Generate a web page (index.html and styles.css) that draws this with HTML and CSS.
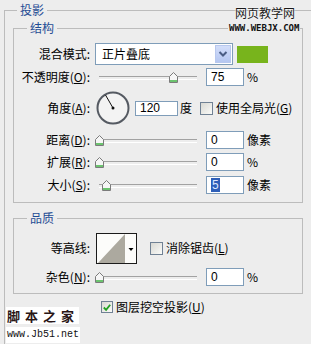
FILE: index.html
```html
<!DOCTYPE html>
<html lang="zh-CN">
<head>
    <meta charset="UTF-8">
    <title>投影</title>
    <link rel="stylesheet" href="styles.css">
</head>
<body>
    <fieldset class="group outer">
        <legend>投影</legend>

        <fieldset class="group inner">
            <legend>结构</legend>
            <div class="row row-blend">
                <label class="label">混合模式:</label>
                <div class="select">
                    <span class="select-text">正片叠底</span>
                    <span class="select-btn">
                        <svg width="14" height="18" viewBox="0 0 14 18"><polyline points="3.5,7 7,10.5 10.5,7" fill="none" stroke="#4a5d84" stroke-width="2"/></svg>
                    </span>
                </div>
                <span class="swatch"></span>
            </div>
            <div class="row row-opacity">
                <label class="label">不透明度(<u>O</u>):</label>
                <div class="slider"><span class="thumb" style="left: 74px"><svg width="9" height="11" viewBox="0 0 9 11"><path d="M0.5 10.5V4.5L4.5 0.5L8.5 4.5V10.5Z" fill="#f6f6f6" stroke="#7b7b7b"/><rect x="1" y="8" width="7" height="2" fill="#6cc36f"/></svg></span></div>
                <span class="field">75</span>
                <span class="unit">%</span>
            </div>
            <div class="row row-angle">
                <label class="label">角度(<u>A</u>):</label>
                <svg class="dial" width="34" height="34" viewBox="0 0 34 34">
                    <circle cx="17" cy="17" r="15.5" fill="#f3f3f3" stroke="#555a62" stroke-width="2"/>
                    <line x1="17" y1="17" x2="9.5" y2="4" stroke="#111" stroke-width="1"/>
                    <circle cx="17" cy="17" r="1.5" fill="#111"/>
                </svg>
                <span class="field field-angle">120</span>
                <span class="unit-deg">度</span>
                <span class="check"></span>
                <span class="check-text">使用全局光(<u>G</u>)</span>
            </div>
            <div class="row row-distance">
                <label class="label">距离(<u>D</u>):</label>
                <div class="slider"><span class="thumb" style="left: 0px"><svg width="9" height="11" viewBox="0 0 9 11"><path d="M0.5 10.5V4.5L4.5 0.5L8.5 4.5V10.5Z" fill="#f6f6f6" stroke="#7b7b7b"/><rect x="1" y="8" width="7" height="2" fill="#6cc36f"/></svg></span></div>
                <span class="field">0</span>
                <span class="unit">像素</span>
            </div>
            <div class="row row-spread">
                <label class="label">扩展(<u>R</u>):</label>
                <div class="slider"><span class="thumb" style="left: 0px"><svg width="9" height="11" viewBox="0 0 9 11"><path d="M0.5 10.5V4.5L4.5 0.5L8.5 4.5V10.5Z" fill="#f6f6f6" stroke="#7b7b7b"/><rect x="1" y="8" width="7" height="2" fill="#6cc36f"/></svg></span></div>
                <span class="field">0</span>
                <span class="unit">%</span>
            </div>
            <div class="row row-size">
                <label class="label">大小(<u>S</u>):</label>
                <div class="slider"><span class="thumb" style="left: 7px"><svg width="9" height="11" viewBox="0 0 9 11"><path d="M0.5 10.5V4.5L4.5 0.5L8.5 4.5V10.5Z" fill="#f6f6f6" stroke="#7b7b7b"/><rect x="1" y="8" width="7" height="2" fill="#6cc36f"/></svg></span></div>
                <span class="field"><span class="sel">5</span></span>
                <span class="unit">像素</span>
            </div>
        </fieldset>

        <fieldset class="group inner quality">
            <legend>品质</legend>
            <div class="row row-contour">
                <label class="label">等高线:</label>
                <svg class="contour" width="41" height="31" viewBox="0 0 41 31">
                    <rect x="0.5" y="0.5" width="40" height="30" fill="#fcfcfa" stroke="#1b1b1b"/>
                    <polygon points="2,30 29,1 29,30" fill="#aca99f"/>
                    <polygon points="32.5,15 37.5,15 35,18" fill="#000"/>
                </svg>
                <span class="check check-contour"></span>
                <span class="check-text">消除锯齿(<u>L</u>)</span>
            </div>
            <div class="row row-noise">
                <label class="label">杂色(<u>N</u>):</label>
                <div class="slider"><span class="thumb" style="left: 0px"><svg width="9" height="11" viewBox="0 0 9 11"><path d="M0.5 10.5V4.5L4.5 0.5L8.5 4.5V10.5Z" fill="#f6f6f6" stroke="#7b7b7b"/><rect x="1" y="8" width="7" height="2" fill="#6cc36f"/></svg></span></div>
                <span class="field">0</span>
                <span class="unit">%</span>
            </div>
        </fieldset>

        <div class="row row-knockout">
            <span class="check checked">
                <svg width="11" height="11" viewBox="0 0 11 11"><polyline points="2,5.5 4.5,8 9,2.5" fill="none" stroke="#21a121" stroke-width="2"/></svg>
            </span>
            <span class="check-text">图层挖空投影(<u>U</u>)</span>
        </div>
    </fieldset>

    <!-- watermarks over the dialog -->
    <div class="wm-site">网页教学网</div>
    <div class="wm-url">WWW.WEBJX.COM</div>
    <div class="wm-jb">脚本之家</div>
    <div class="wm-jburl">www.Jb51.net</div>
</body>
</html>
```

FILE: styles.css
```css
* {
    box-sizing: border-box;
}

body {
    margin: 0;
    width: 311px;
    height: 344px;
    overflow: hidden;
    position: relative;
    background: #ededed;
    font: 12px/14px "Noto Sans CJK SC", "Liberation Sans", sans-serif;
    color: #000;
}

u {
    text-decoration: underline;
    text-underline-offset: 1px;
}

/* group boxes */
.group {
    margin: 0;
    padding: 0;
    border: 1px solid #bcbcbc;
    min-width: 0;
}

.group > legend {
    padding: 0 3px;
    line-height: 14px;
    color: #1f4c94;
}

/* the outer box runs on past the window */
.outer {
    margin: 3px 0 0 4px;
    width: 307px;
    height: 341px;
    padding: 4px 0 0 8px;
    border-right: 0;
    border-bottom: 0;
}

.outer > legend {
    margin-left: 4px;
}

.inner {
    width: 290px;
    padding: 7px 0 4px 0;
}

.inner > legend {
    margin-left: 13px;
}

.quality {
    margin-top: 8px;
    padding: 7px 0 6px 0;
}

/* rows */
.row {
    display: flex;
    align-items: center;
}

.label {
    width: 76px;
    margin-right: 5px;
    text-align: right;
    white-space: nowrap;
}

.row-blend { height: 24px; }
.row-opacity { height: 22px; }
.row-angle { height: 40px; }
.row-distance { height: 24px; }
.row-spread { height: 20px; }
.row-size { height: 26px; }
.row-contour { height: 32px; }
.row-noise { height: 20px; margin-top: 3px; }

.row-knockout {
    height: 14px;
    margin: 6px 0 0 88px;
}

/* blend mode select */
.select {
    display: flex;
    align-items: center;
    width: 138px;
    height: 22px;
    padding: 1px;
    border: 1px solid #7f9db9;
    background: #fff;
}

.select-text {
    flex: 1;
    padding-left: 5px;
}

.select-btn {
    display: flex;
    align-items: center;
    justify-content: center;
    width: 16px;
    height: 18px;
    border: 1px solid #b8c8ee;
    background: linear-gradient(#d3defa, #b5c7f1);
}

.swatch {
    width: 31px;
    height: 17px;
    margin-left: 4px;
    background: #78b41c;
}

/* sliders */
.slider {
    position: relative;
    width: 102px;
    height: 12px;
}

.slider::before {
    content: "";
    position: absolute;
    left: 4px;
    right: 0;
    top: 5px;
    height: 2px;
    border-top: 1px solid #a2a2a2;
    border-bottom: 1px solid #fff;
}

.thumb {
    position: absolute;
    top: 1px;
    width: 9px;
    height: 11px;
    display: flex;
}

/* numeric fields */
.field {
    width: 38px;
    height: 18px;
    margin-left: 9px;
    padding-left: 4px;
    border: 1px solid #7f9db9;
    background: #fff;
    line-height: 16px;
    font-family: "Liberation Sans", sans-serif;
}

.field-angle {
    width: 43px;
    height: 15px;
    margin-left: 5px;
    line-height: 13px;
}

.sel {
    background: #2f5fb8;
    color: #dfe8ff;
    padding: 0 1px;
}

.unit {
    margin-left: 3px;
}

.unit-deg {
    margin-left: 2px;
}

.dial {
    margin-left: 1px;
}

/* checkboxes */
.check {
    display: flex;
    align-items: center;
    justify-content: center;
    width: 13px;
    height: 13px;
    margin-left: 8px;
    border: 1px solid #708194;
    background: linear-gradient(135deg, #d8d8d2, #fbfbf9);
}

.check-contour {
    margin-left: 13px;
}

.row-knockout .check {
    width: 12px;
    height: 12px;
    margin-left: 0;
}

.check-text {
    margin-left: 3px;
    white-space: nowrap;
}

.contour {
    margin-left: 1px;
}

/* watermarks */
.wm-site {
    position: absolute;
    top: 6px;
    left: 235px;
    font-size: 12px;
    color: #1a1a1a;
    text-shadow: 0 0 2px #fff, 0 0 1px #fff;
}

.wm-url {
    position: absolute;
    top: 23px;
    left: 228px;
    padding: 0 1px;
    background: #ededed;
    font: bold 9px/10px "DejaVu Sans Mono", monospace;
    color: #111;
}

.wm-jb {
    position: absolute;
    top: 307px;
    left: 6px;
    padding: 1px 0 1px 1px;
    background: #fff;
    font-size: 13px;
    line-height: 15px;
    font-weight: bold;
    letter-spacing: 5px;
    white-space: nowrap;
    color: #2a1616;
}

.wm-jburl {
    position: absolute;
    top: 327px;
    left: 6px;
    padding: 1px 1px;
    background: #fff;
    font: 10px/14px "Liberation Mono", monospace;
    color: #111;
}
```
